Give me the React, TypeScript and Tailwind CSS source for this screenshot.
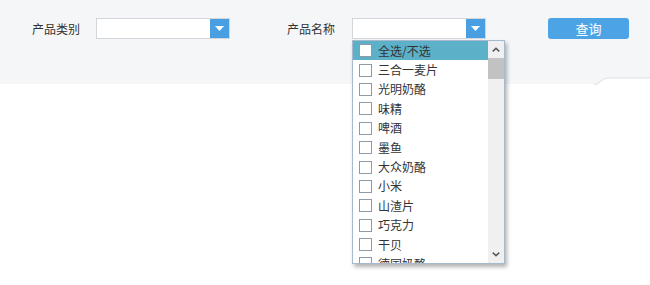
import React from "react";

const items = [
  "全选/不选",
  "三合一麦片",
  "光明奶酪",
  "味精",
  "啤酒",
  "墨鱼",
  "大众奶酪",
  "小米",
  "山渣片",
  "巧克力",
  "干贝",
  "德国奶酪",
];

function Select({ className = "" }: { className?: string }) {
  return (
    <div className={`flex h-[21px] w-[134px] border border-[#d3d6db] bg-white ${className}`}>
      <div className="flex-1" />
      <div className="flex h-full w-[19px] items-center justify-center bg-[#4a9fe2]">
        <svg width="9" height="5" viewBox="0 0 9 5">
          <path d="M0 0 L9 0 L4.5 5 Z" fill="#fff" />
        </svg>
      </div>
    </div>
  );
}

export default function App() {
  return (
    <div
      className="relative h-[285px] w-[650px] overflow-hidden bg-white text-[12px] text-[#333]"
      style={{ fontFamily: '"Noto Sans CJK SC", "Noto Sans", sans-serif' }}
    >
      <div className="flex h-[84px] items-start bg-[#f5f6f8] pl-[32px] pt-[18px]">
        <div className="flex h-[21px] w-[47px] items-center whitespace-nowrap">产品类别</div>
        <Select className="ml-[17px]" />
        <div className="ml-[57px] flex h-[21px] w-[48px] items-center whitespace-nowrap">产品名称</div>
        <Select className="ml-[17px]" />
        <button className="ml-[62px] flex h-[21px] w-[81px] items-center justify-center rounded-[3px] bg-[#4ca4e6] text-[13px] text-white">
          查询
        </button>
      </div>

      {/* tab decoration */}
      <svg className="absolute left-[594px] top-[76px]" width="56" height="9" viewBox="0 0 56 9">
        <path d="M0 9 C6 9 8 2 14 2 L56 2 L56 9 Z" fill="#fff" />
        <path d="M0 8.5 C6 8.5 8 2 14 2 L56 2" fill="none" stroke="#dcdfe4" strokeWidth="1" />
      </svg>

      {/* dropdown */}
      <div className="absolute left-[352px] top-[40px] flex h-[224px] w-[153px] border border-[#a7b9cc] bg-white shadow-[2px_3px_4px_rgba(0,0,0,0.3)]">
        <div className="flex-1 overflow-hidden">
          {items.map((t, i) => (
            <div
              key={t}
              className={`flex h-[19.4px] items-center pl-[6px] whitespace-nowrap ${
                i === 0 ? "bg-[#5cb0c8]" : ""
              }`}
            >
              <span className="mr-[6px] h-[13px] w-[13px] shrink-0 border border-[#8f9aa6] bg-white" />
              <span className="leading-none">{t}</span>
            </div>
          ))}
        </div>
        <div className="flex w-[16px] flex-col bg-[#f0f0f0]">
          <div className="flex h-[17px] items-center justify-center">
            <svg width="8" height="5" viewBox="0 0 8 5">
              <path d="M0.8 4.4 L4 1.2 L7.2 4.4" fill="none" stroke="#555" strokeWidth="1.5" />
            </svg>
          </div>
          <div className="h-[21px] bg-[#c2c2c2]" />
          <div className="flex-1" />
          <div className="flex h-[17px] items-center justify-center">
            <svg width="8" height="5" viewBox="0 0 8 5">
              <path d="M0.8 0.6 L4 3.8 L7.2 0.6" fill="none" stroke="#555" strokeWidth="1.5" />
            </svg>
          </div>
        </div>
      </div>
    </div>
  );
}
